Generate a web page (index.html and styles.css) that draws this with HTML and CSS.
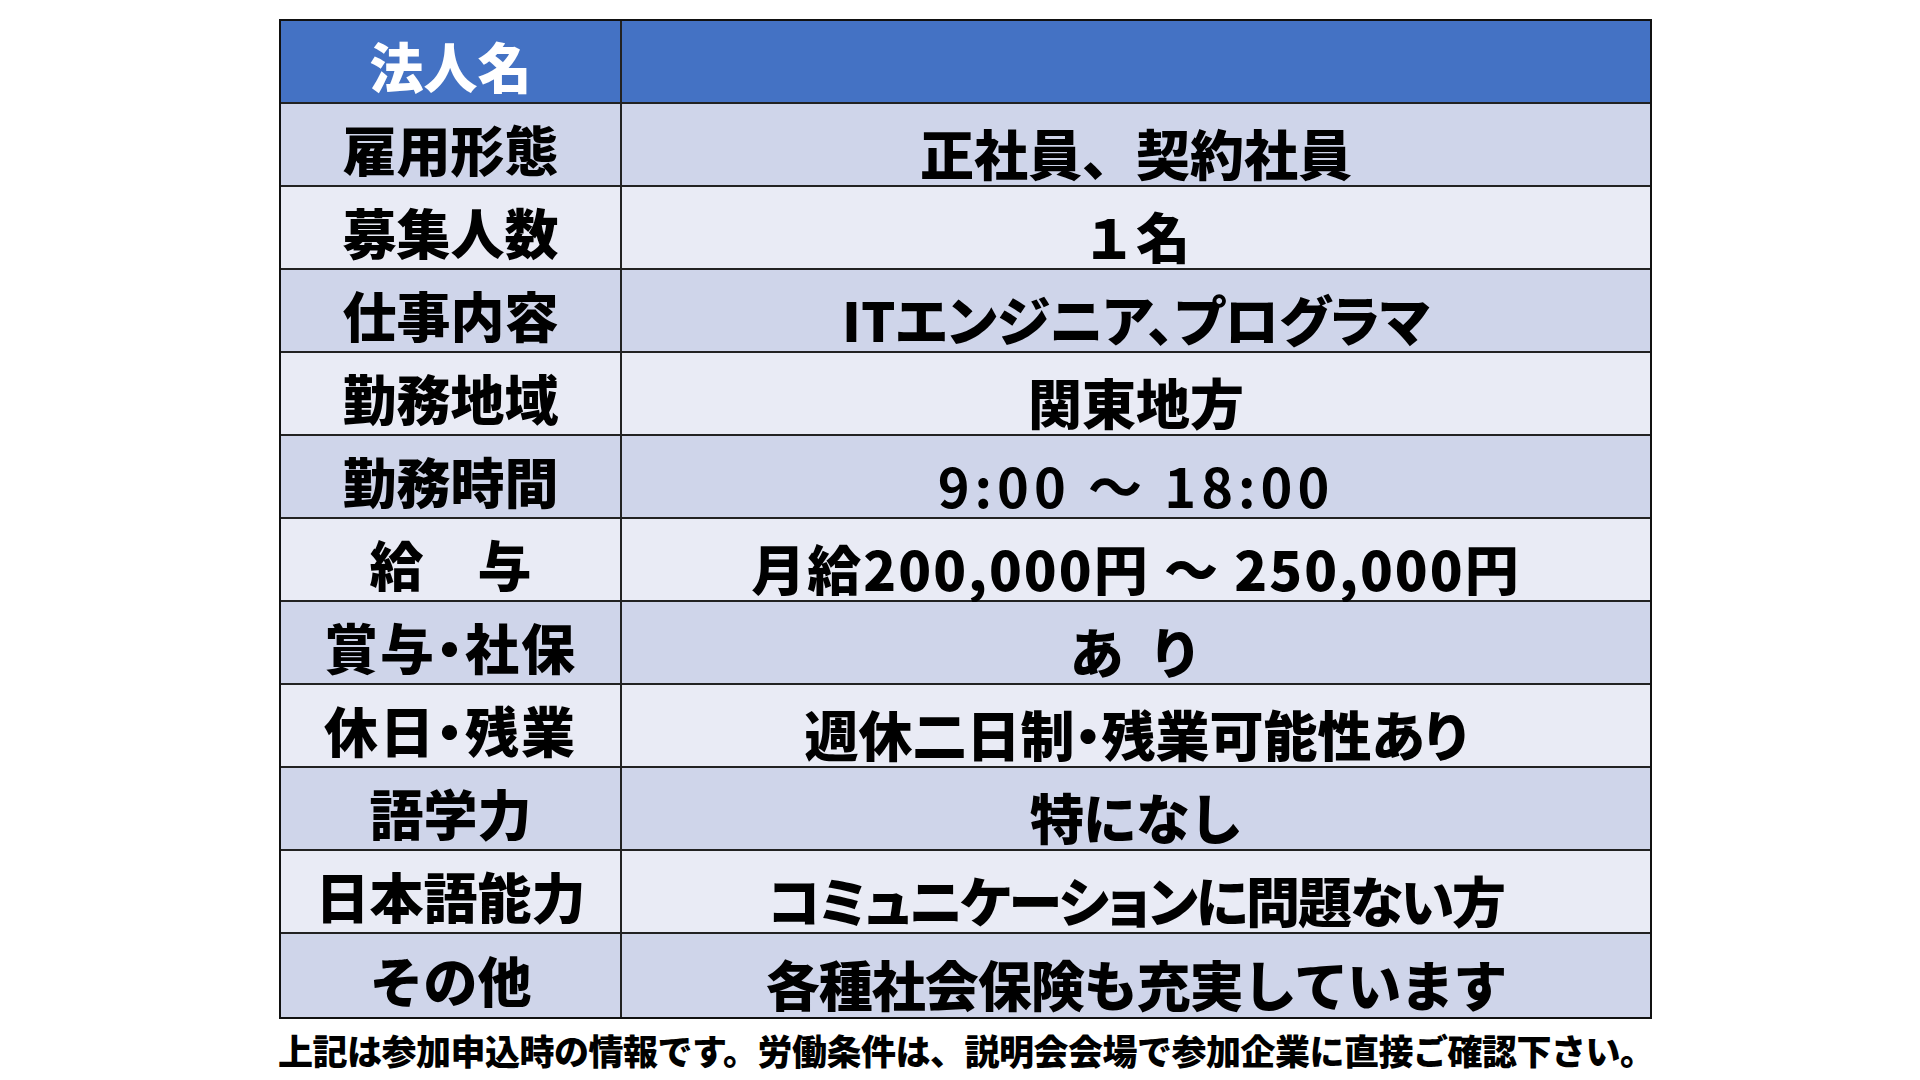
FILE: index.html
```html
<!DOCTYPE html>
<html lang="ja">
<head>
<meta charset="utf-8">
<title>求人情報</title>
<link rel="stylesheet" href="styles.css">
</head>
<body>
<div class="page">
  <div class="sheet">
    <div class="cell label head">法人名</div>
    <div class="cell value head"></div>

    <div class="cell label dark">雇用形態</div>
    <div class="cell value dark">正社員、契約社員</div>

    <div class="cell label light">募集人数</div>
    <div class="cell value light">１名</div>

    <div class="cell label dark">仕事内容</div>
    <div class="cell value dark prop">ITエンジニア、プログラマ</div>

    <div class="cell label light">勤務地域</div>
    <div class="cell value light">関東地方</div>

    <div class="cell label dark">勤務時間</div>
    <div class="cell value dark time">9:00 ～ 18:00</div>

    <div class="cell label light">給　与</div>
    <div class="cell value light pay">月給200,000円 ～ 250,000円</div>

    <div class="cell label dark prop dot">賞与・社保</div>
    <div class="cell value dark">あ&nbsp;&nbsp;り</div>

    <div class="cell label light prop dot">休日・残業</div>
    <div class="cell value light prop">週休二日制・残業可能性あり</div>

    <div class="cell label dark">語学力</div>
    <div class="cell value dark tight">特になし</div>

    <div class="cell label light">日本語能力</div>
    <div class="cell value light prop narrow">コミュニケーションに問題ない方</div>

    <div class="cell label dark last">その他</div>
    <div class="cell value dark last tight">各種社会保険も充実しています</div>
  </div>
  <p class="note">上記は参加申込時の情報です。労働条件は、説明会会場で参加企業に直接ご確認下さい。</p>
</div>
</body>
</html>
```

FILE: styles.css
```css
html, body {
  margin: 0;
  padding: 0;
  background: #ffffff;
}

body {
  width: 1920px;
  height: 1080px;
  overflow: hidden;
  font-family: "Noto Sans CJK JP", "Noto Sans", sans-serif;
  font-weight: 900;
  color: #000000;
}

.page {
  padding: 19px 0 0 279px;
}

.sheet {
  width: 1373px;
  box-sizing: border-box;
  border: 2px solid #111111;
  display: grid;
  grid-template-columns: 341px 1fr;
  grid-auto-rows: 83px;
}

.cell {
  box-sizing: border-box;
  border-bottom: 2px solid #222222;
  display: flex;
  align-items: center;
  justify-content: center;
  font-size: 54px;
  line-height: 1;
  white-space: nowrap;
}

.cell.last {
  border-bottom: none;
}

.label {
  border-right: 2px solid #222222;
  padding-top: 8px;
}

.value {
  padding-top: 16px;
}

.head {
  background: #4472c4;
  color: #ffffff;
}

.dark {
  background: #cfd5ea;
}

.light {
  background: #e9ebf5;
}

.prop {
  font-feature-settings: "palt" 1;
}

.dot {
  letter-spacing: 2px;
}

.time {
  letter-spacing: 5px;
  font-weight: 700;
}

.pay {
  letter-spacing: 2px;
}

.tight {
  letter-spacing: -1px;
}

.narrow {
  letter-spacing: -2px;
}

.note {
  margin: 10px 0 0 -1px;
  font-size: 35px;
  line-height: 1.2;
  letter-spacing: -0.5px;
  white-space: nowrap;
}
```
